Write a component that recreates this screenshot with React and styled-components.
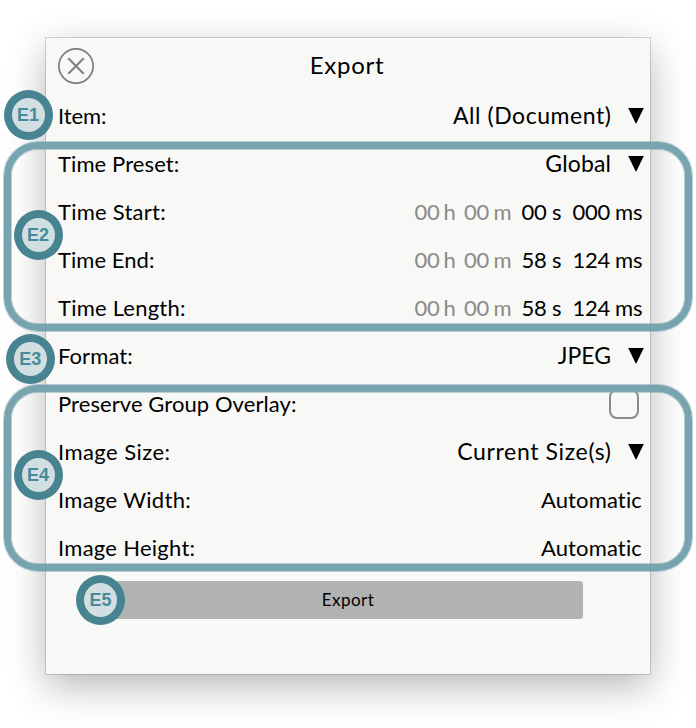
import React from 'react';
import styled, { createGlobalStyle } from 'styled-components';

const GlobalStyle = createGlobalStyle`
  * { box-sizing: border-box; }
  body { margin: 0; background: #fff; }
`;

const Page = styled.main`
  position: relative;
  width: 696px;
  height: 728px;
  padding: 38px 46px 0;
  overflow: hidden;
  background: #fff;
  font-family: Lato, sans-serif;
  color: #000;
`;

const Panel = styled.section`
  width: 604px;
  height: 636px;
  background: #f8f8f6;
  box-shadow: 0 0 0 1px rgba(0, 0, 0, 0.15), 0 12px 36px rgba(0, 0, 0, 0.29);
`;

const Header = styled.header`
  display: grid;
  grid-template-columns: 36px 1fr 36px;
  align-items: center;
  height: 54px;
  padding: 2px 12px 0;
`;

const CloseButton = styled.button`
  display: block;
  width: 36px;
  height: 36px;
  padding: 0;
  border: 0;
  background: none;
  svg { display: block; }
`;

const Title = styled.h1`
  margin: 0;
  padding: 0 2px 2px 0;
  text-align: center;
  font-size: 24px;
  font-weight: 400;
  line-height: 30px;
  letter-spacing: 0.72px;
`;

const Row = styled.div`
  display: flex;
  align-items: center;
  justify-content: space-between;
  height: 48px;
  padding: 0 6px 0 12px;
`;

const Label = styled.span`
  font-size: 22px;
  line-height: 30px;
  white-space: nowrap;
  letter-spacing: ${(p) => p.$track}px;
`;

const Select = styled.div`
  display: flex;
  align-items: center;
  gap: 17px;
  svg { display: block; }
`;

const SelectText = styled.span`
  padding-bottom: 2px;
  font-size: 23px;
  line-height: 30px;
  white-space: nowrap;
  letter-spacing: ${(p) => p.$track}px;
  margin-right: ${(p) => -p.$track}px;
`;

const Value = styled.span`
  padding-right: 2px;
  font-size: 22px;
  line-height: 30px;
  letter-spacing: 0.15px;
`;

const Time = styled.div`
  display: grid;
  grid-template-columns: 29px 20.5px 29.5px 28px 30.5px 20.5px 42.5px 29px;
  font-size: 22px;
  line-height: 30px;
`;

const Digits = styled.span`
  letter-spacing: -0.2px;
  color: ${(p) => (p.$dim ? '#8a8a89' : '#000')};
`;

const Unit = styled.span`
  color: ${(p) => (p.$dim ? '#8a8a89' : '#000')};
`;

const Checkbox = styled.span`
  width: 30px;
  height: 30px;
  margin-right: 5px;
  border: 2px solid #8b8b8a;
  border-radius: 8px;
`;

const ExportButton = styled.button`
  display: block;
  width: 470px;
  height: 38px;
  margin: 9px auto 0 67px;
  padding: 0;
  border: 0;
  border-radius: 3.5px;
  background: #b0b3b2;
  color: #000;
  font: 17px/38px Lato, sans-serif;
  letter-spacing: 0.5px;
`;

const Frame = styled.div`
  position: absolute;
  left: 4px;
  top: ${(p) => p.$top}px;
  width: 688px;
  height: ${(p) => p.$height}px;
  border: 7px solid #77a4af;
  border-radius: 34px;
  box-shadow: 0 0 0 1px rgba(119, 164, 175, 0.5), inset 0 0 0 1px rgba(119, 164, 175, 0.5);
`;

const Badge = styled.div`
  position: absolute;
  left: ${(p) => p.$x}px;
  top: ${(p) => p.$y}px;
  width: 49px;
  height: 50px;
  border: 8px solid #478390;
  border-radius: 50%;
  background: #d1dfe3;
  color: #478b9a;
  text-align: center;
  font: bold 18px/34px "Liberation Sans", Arial, sans-serif;
`;

const Arrow = () => (
  <svg width="16" height="16" viewBox="0 0 16 16">
    <path d="M0.2 0H15.8L8 16Z" fill="#000" />
  </svg>
);

const Dropdown = ({ text, track }) => (
  <Select>
    <SelectText $track={track}>{text}</SelectText>
    <Arrow />
  </Select>
);

const Duration = ({ seconds, millis }) => (
  <Time>
    <Digits $dim>00</Digits><Unit $dim>h</Unit>
    <Digits $dim>00</Digits><Unit $dim>m</Unit>
    <Digits>{seconds}</Digits><Unit>s</Unit>
    <Digits>{millis}</Digits><Unit>ms</Unit>
  </Time>
);

const rows = [
  { label: 'Item:', track: -0.1, control: <Dropdown text="All (Document)" track={0.57} /> },
  { label: 'Time Preset:', track: 0.1, control: <Dropdown text="Global" track={0.15} /> },
  { label: 'Time Start:', track: 0.25, control: <Duration seconds="00" millis="000" /> },
  { label: 'Time End:', track: 0.05, control: <Duration seconds="58" millis="124" /> },
  { label: 'Time Length:', track: 0.22, control: <Duration seconds="58" millis="124" /> },
  { label: 'Format:', track: 0.08, control: <Dropdown text="JPEG" track={0} /> },
  { label: 'Preserve Group Overlay:', track: 0.08, control: <Checkbox /> },
  { label: 'Image Size:', track: 0.45, control: <Dropdown text="Current Size(s)" track={0.64} /> },
  { label: 'Image Width:', track: 0.33, control: <Value>Automatic</Value> },
  { label: 'Image Height:', track: 0.27, control: <Value>Automatic</Value> },
];

const badges = [
  { id: 'E1', x: 3.5, y: 89.5 },
  { id: 'E2', x: 13.5, y: 209.5 },
  { id: 'E3', x: 5.7, y: 333.5 },
  { id: 'E4', x: 13.5, y: 450.4 },
  { id: 'E5', x: 76, y: 575.4 },
];

export default function App() {
  return (
    <Page>
      <GlobalStyle />
      <Panel>
        <Header>
          <CloseButton aria-label="Close">
            <svg width="36" height="36" viewBox="0 0 36 36" fill="none" stroke="#7f7d80">
              <circle cx="18" cy="18" r="17.1" strokeWidth="1.7" />
              <path d="M10.3 10.3L25.7 25.7M25.7 10.3L10.3 25.7" strokeWidth="2" />
            </svg>
          </CloseButton>
          <Title>Export</Title>
        </Header>
        {rows.map((row) => (
          <Row key={row.label}>
            <Label $track={row.track}>{row.label}</Label>
            {row.control}
          </Row>
        ))}
        <ExportButton>Export</ExportButton>
      </Panel>
      <Frame $top={142} $height={189} />
      <Frame $top={385} $height={186} />
      {badges.map((b) => (
        <Badge key={b.id} $x={b.x} $y={b.y}>{b.id}</Badge>
      ))}
    </Page>
  );
}
